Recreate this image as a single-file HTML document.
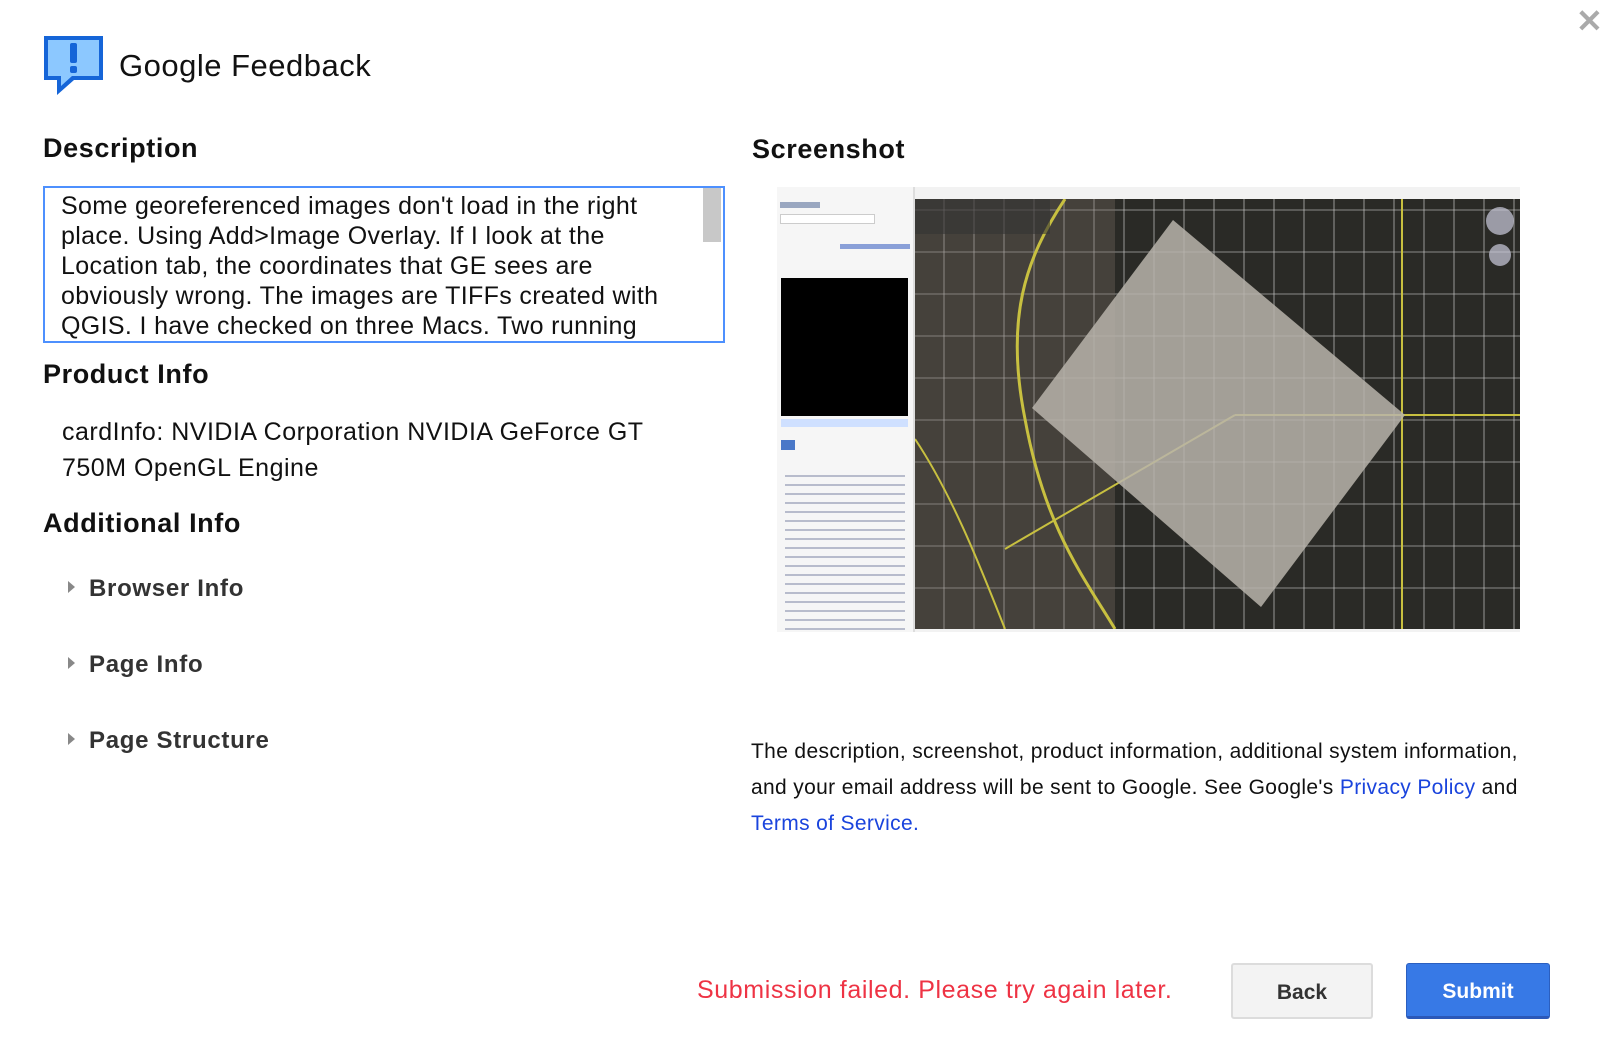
<!DOCTYPE html>
<html><head><meta charset="utf-8"><style>
*{margin:0;padding:0;box-sizing:border-box}
body{width:1622px;height:1050px;background:#fff;position:relative;overflow:hidden;font-family:"Liberation Sans",Arial,sans-serif;color:#222}
.a{position:absolute;white-space:nowrap}
h2{position:absolute;font-size:27px;font-weight:bold;color:#111;white-space:nowrap;line-height:1;letter-spacing:0.6px}
.ta{position:absolute;left:43px;top:186px;width:682px;height:157px;border:2px solid #4d90fe;overflow:hidden}
.tx{position:absolute;left:16px;top:3px;font-size:25px;line-height:30px;color:#111;white-space:nowrap;letter-spacing:0.35px}
.sb{position:absolute;right:2px;top:0;width:18px;height:54px;background:#c8c8c8}
.exp{position:absolute;left:89px;font-size:24px;font-weight:bold;color:#333;line-height:1;letter-spacing:0.7px}
.tri{position:absolute;left:68px;width:0;height:0;border-left:7px solid #888;border-top:6px solid transparent;border-bottom:6px solid transparent}
.btn{position:absolute;top:963px;height:56px;border-radius:3px;font-size:21px;font-weight:bold;text-align:center;line-height:56px}
a{color:#1a44dd;text-decoration:none}
</style></head><body>
<div class="a" style="left:1576px;top:2px;font-size:32px;color:#aaa;font-weight:bold">✕</div>
<svg class="a" style="left:40px;top:33px" width="68" height="66" viewBox="0 0 68 66">
<path d="M4 3 H63 V47 H34 L17 62 V47 H4 Z" fill="#1565d8"/>
<path d="M8 7 H59 V43 H32 L21 53 V43 H8 Z" fill="#8cc8ff"/>
<rect x="30" y="10" width="7" height="20" rx="2" fill="#1565d8"/>
<rect x="30" y="33" width="7" height="7" rx="2" fill="#1565d8"/>
</svg>
<div class="a" style="left:119px;top:48px;font-size:31px;color:#111;letter-spacing:0.5px">Google Feedback</div>
<h2 style="left:43px;top:135px">Description</h2>
<div class="ta"><div class="tx">Some georeferenced images don't load in the right<br>place. Using Add&gt;Image Overlay. If I look at the<br>Location tab, the coordinates that GE sees are<br>obviously wrong. The images are TIFFs created with<br>QGIS. I have checked on three Macs. Two running</div><div class="sb"></div></div>
<h2 style="left:43px;top:361px">Product Info</h2>
<div class="a" style="left:62px;top:414px;font-size:25px;line-height:36px;color:#111;letter-spacing:0.5px">cardInfo: NVIDIA Corporation NVIDIA GeForce GT<br>750M OpenGL Engine</div>
<h2 style="left:43px;top:510px">Additional Info</h2>
<div class="tri" style="top:581px"></div><div class="exp" style="top:577px">Browser Info</div>
<div class="tri" style="top:657px"></div><div class="exp" style="top:653px">Page Info</div>
<div class="tri" style="top:733px"></div><div class="exp" style="top:729px">Page Structure</div>
<h2 style="left:752px;top:136px">Screenshot</h2>
<div class="a" style="left:777px;top:187px;width:743px;height:445px;background:#f2f2f2"></div>
<div class="a" style="left:777px;top:187px;width:138px;height:445px;background:#f6f6f6;border-right:2px solid #ddd"></div>
<div class="a" style="left:780px;top:202px;width:40px;height:6px;background:#9aa7c0"></div>
<div class="a" style="left:780px;top:214px;width:95px;height:10px;background:#fff;border:1px solid #ccc"></div>
<div class="a" style="left:840px;top:244px;width:70px;height:5px;background:#8aa0d8"></div>
<div class="a" style="left:781px;top:278px;width:127px;height:138px;background:#000"></div>
<div class="a" style="left:781px;top:419px;width:127px;height:8px;background:#cfe0ff"></div>
<div class="a" style="left:781px;top:440px;width:14px;height:10px;background:#4a78c8"></div>
<div class="a" style="left:785px;top:470px;width:120px;height:160px;background:repeating-linear-gradient(#f6f6f6 0 5px,#b8bccc 5px 7px,#f6f6f6 7px 9px)"></div>
<div class="a" style="left:915px;top:199px;width:605px;height:430px;background:#2a2a26;overflow:hidden">
<div style="position:absolute;inset:0;background:repeating-linear-gradient(90deg,transparent 0 28px,rgba(200,200,200,.35) 28px 30px),repeating-linear-gradient(0deg,transparent 0 40px,rgba(200,200,200,.3) 40px 42px)"></div>
<div style="position:absolute;left:0;top:0;width:200px;height:430px;background:rgba(120,110,100,.35)"></div>
</div>
<svg class="a" style="left:915px;top:199px" width="605" height="430">
<path d="M150 0 C110 60 90 120 110 220 C130 330 170 380 200 430" stroke="#c8c040" stroke-width="3" fill="none"/>
<path d="M0 240 C40 300 70 380 90 430" stroke="#c8c040" stroke-width="2" fill="none"/>
<path d="M487 0 V430 M320 216 H605 M320 216 L90 350" stroke="#c8c040" stroke-width="2" fill="none"/>
<polygon points="258,21 490,216 346,408 117,209" fill="#b8b4ac" fill-opacity="0.85"/>
<rect x="0" y="0" width="135" height="35" fill="#333" opacity=".6"/>
<circle cx="585" cy="22" r="14" fill="#ccd" opacity=".7"/>
<circle cx="585" cy="56" r="11" fill="#ccd" opacity=".7"/>
</svg>
<div class="a" style="left:751px;top:734px;font-size:21px;line-height:36px;color:#111;letter-spacing:0.35px">The description, screenshot, product information, additional system information,<br>and your email address will be sent to Google. See Google's <a>Privacy Policy</a> and<br><a>Terms of Service.</a></div>
<div class="a" style="left:697px;top:976px;font-size:25px;color:#ee3344;letter-spacing:0.6px">Submission failed. Please try again later.</div>
<div class="btn" style="left:1231px;width:142px;background:#f3f3f3;border:2px solid #dcdcdc;color:#333">Back</div>
<div class="btn" style="left:1406px;width:144px;background:#3779e6;border:1px solid #2b5fc0;border-bottom:3px solid #2b58b8;color:#fff">Submit</div>
</body></html>
